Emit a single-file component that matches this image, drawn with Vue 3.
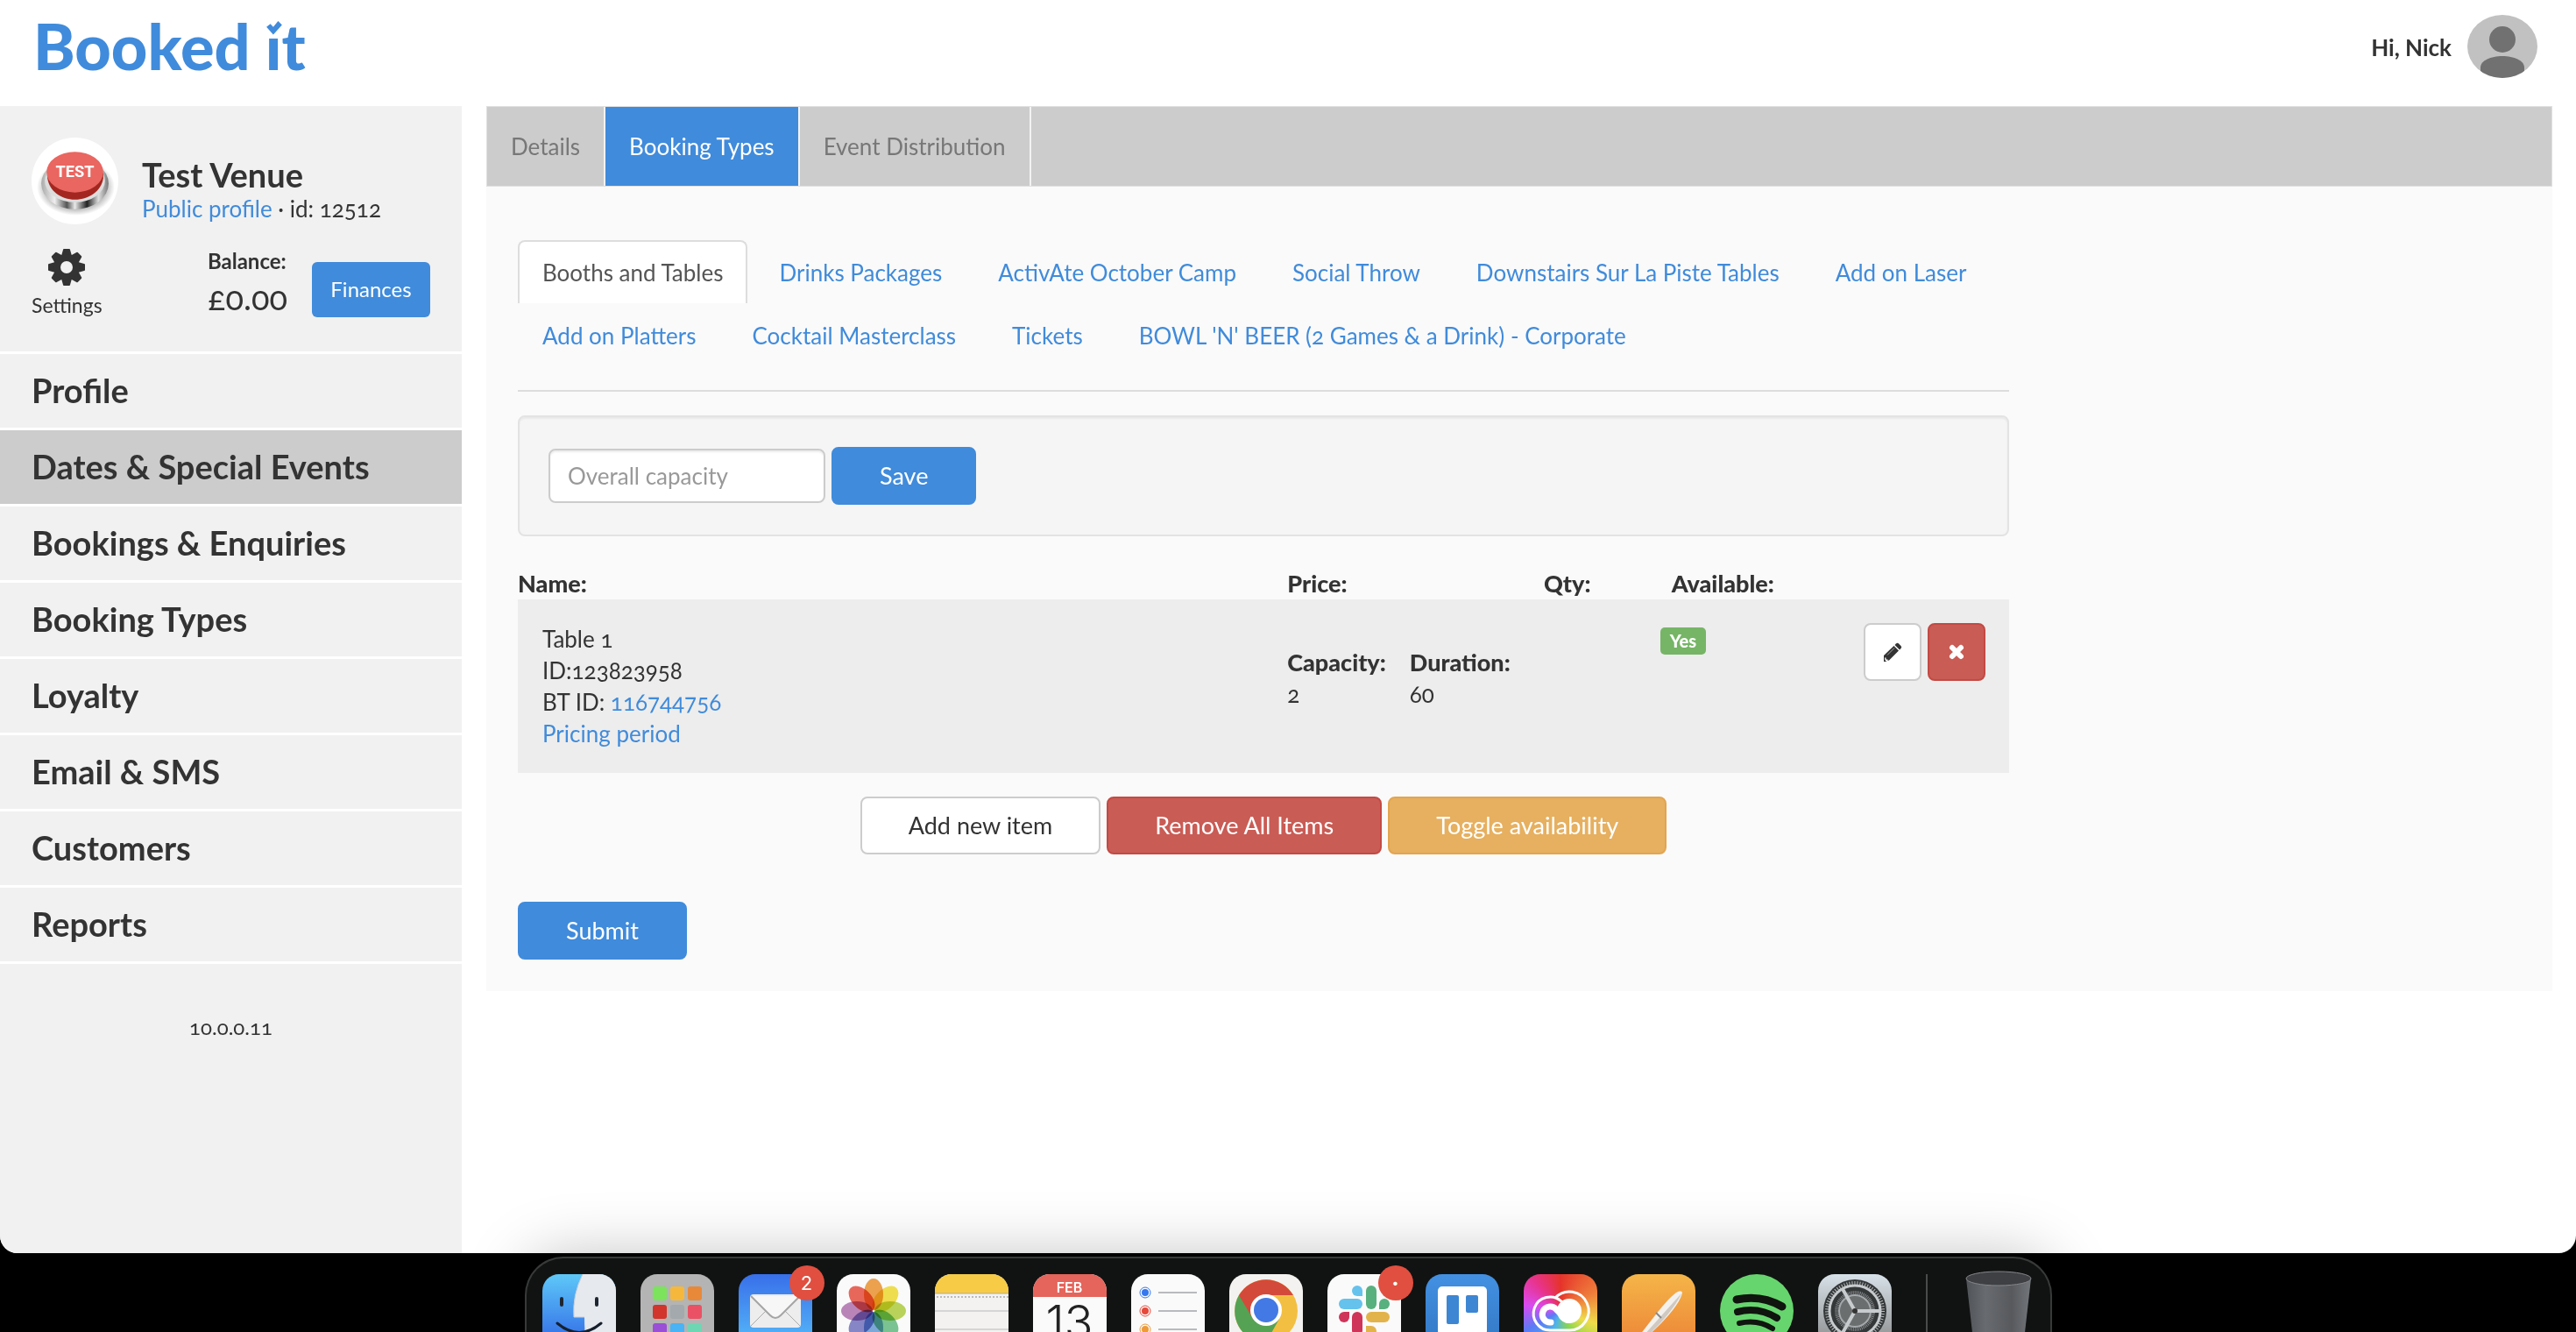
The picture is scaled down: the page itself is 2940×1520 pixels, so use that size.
<script setup>
import { ref } from 'vue'

const capacity = ref('')
const activeMenu = ref('Dates & Special Events')
const activeTab = ref('Booking Types')
const activeType = ref('Booths and Tables')

const menu = [
  'Profile',
  'Dates & Special Events',
  'Bookings & Enquiries',
  'Booking Types',
  'Loyalty',
  'Email & SMS',
  'Customers',
  'Reports',
]

const tabs = ['Details', 'Booking Types', 'Event Distribution']

const types = [
  'Booths and Tables',
  'Drinks Packages',
  'ActivAte October Camp',
  'Social Throw',
  'Downstairs Sur La Piste Tables',
  'Add on Laser',
  'Add on Platters',
  'Cocktail Masterclass',
  'Tickets',
  "BOWL 'N' BEER (2 Games & a Drink) - Corporate",
]

const items = ref([
  { name: 'Table 1', id: '123823958', btId: '116744756', capacity: 2, duration: 60, available: true },
])

function toggleAvailability() {
  items.value.forEach(item => {
    item.available = !item.available
  })
}

function remove(item) {
  items.value = items.value.filter(i => i !== item)
}

// dock artwork
const launchpad = ['#7be35c', '#f5b83d', '#e8893a', '#d1352b', '#a3a9ac', '#ea5164', '#9a4fd6', '#49b3f5', '#6fd6b4']
const petals = ['#ef9a3c', '#f2df3b', '#b5d34a', '#6fc08a', '#6fa3d8', '#7c7cc4', '#b67bb5', '#ea5a4b']
const reminders = ['#3577ee', '#e6493a', '#ee9a38']
</script>

<template>
  <div class="desktop">
    <div class="window">
      <header class="topbar">
        <a href="#" class="logo">Booked <span class="logo-i">i<svg viewBox="0 0 18 18" aria-hidden="true"><path d="M0 0h18v18H0z" fill="#fff" /><path d="M1 6l4-3 3 3 5-6 4 4-9 10z" fill="#408bdb" /></svg></span>t</a>
        <a href="#" class="user">
          <span>Hi, Nick</span>
          <svg class="user-pic" viewBox="0 0 81 73" aria-hidden="true">
            <clipPath id="user-clip"><ellipse cx="40" cy="36" rx="40" ry="36" /></clipPath>
            <g clip-path="url(#user-clip)">
              <rect width="81" height="73" fill="#c1c1c1" />
              <circle cx="40" cy="28" r="15" fill="#717171" />
              <path d="M15 73V60c0-8 12-13 25-13s25 5 25 13v13z" fill="#717171" />
            </g>
          </svg>
        </a>
      </header>

      <div class="body">
        <aside class="sidebar">
          <div class="venue">
            <div class="venue-head">
              <svg class="venue-pic" viewBox="0 0 98 98" aria-hidden="true">
                <defs>
                  <linearGradient id="chrome-ring" x1="0" x2="1">
                    <stop offset="0" stop-color="#aaa" />
                    <stop offset=".2" stop-color="#eee" />
                    <stop offset=".38" stop-color="#555" />
                    <stop offset=".5" stop-color="#e8e8e8" />
                    <stop offset=".68" stop-color="#222" />
                    <stop offset=".85" stop-color="#ddd" />
                    <stop offset="1" stop-color="#777" />
                  </linearGradient>
                  <radialGradient id="btn-shadow">
                    <stop offset=".6" stop-color="#000" stop-opacity=".45" />
                    <stop offset="1" stop-color="#000" stop-opacity="0" />
                  </radialGradient>
                </defs>
                <circle cx="49" cy="49" r="49" fill="#fff" />
                <ellipse cx="50" cy="56" rx="44" ry="32" fill="url(#btn-shadow)" />
                <ellipse cx="49" cy="52" rx="38" ry="29" fill="url(#chrome-ring)" />
                <ellipse cx="49" cy="49" rx="34" ry="24" fill="#ddd" />
                <path d="M18 40v6c2 14 15 24 31 24s30-10 32-24v-6z" fill="#a32620" />
                <ellipse cx="49" cy="39" rx="32" ry="23" fill="#ea6660" />
                <text x="49" y="45" text-anchor="middle">TEST</text>
              </svg>
              <div>
                <h1>Test Venue</h1>
                <p><a href="#">Public profile</a> · id: 12512</p>
              </div>
            </div>
            <div class="venue-foot">
              <a href="#" class="settings">
                <svg viewBox="-21 -21 42 42" aria-hidden="true">
                  <path v-for="n in 8" :key="n" d="M-6-13l2-7q0-1 1-1h6q1 0 1 1l2 7z" :transform="`rotate(${n * 45})`" />
                  <circle r="11" fill="none" stroke="#333" stroke-width="8" />
                </svg>
                Settings
              </a>
              <div class="balance">
                <strong>Balance:</strong>
                <span>£0.00</span>
              </div>
              <button type="button" class="finances">Finances</button>
            </div>
          </div>
          <nav class="menu">
            <a v-for="m in menu" :key="m" href="#" :class="{ active: m === activeMenu }" @click.prevent="activeMenu = m">{{ m }}</a>
          </nav>
          <p class="ip">10.0.0.11</p>
        </aside>

        <main class="content">
          <nav class="tabs">
            <a v-for="t in tabs" :key="t" href="#" :class="{ active: t === activeTab }" @click.prevent="activeTab = t">{{ t }}</a>
          </nav>

          <section class="panel">
            <nav class="types">
              <a v-for="t in types" :key="t" href="#" :class="{ active: t === activeType }" @click.prevent="activeType = t">{{ t }}</a>
            </nav>
            <hr>
            <form class="well" @submit.prevent>
              <input v-model="capacity" type="text" placeholder="Overall capacity" aria-label="Overall capacity">
              <button type="submit" class="btn btn-primary">Save</button>
            </form>

            <table class="items">
              <colgroup>
                <col class="col-name">
                <col class="col-price">
                <col class="col-qty">
                <col class="col-avail">
                <col>
              </colgroup>
              <thead>
                <tr>
                  <th>Name:</th>
                  <th>Price:</th>
                  <th>Qty:</th>
                  <th class="th-avail">Available:</th>
                  <th></th>
                </tr>
              </thead>
              <tbody>
                <tr v-for="item in items" :key="item.id">
                  <td class="td-name">
                    <div>{{ item.name }}</div>
                    <div>ID:{{ item.id }}</div>
                    <div>BT ID: <a href="#">{{ item.btId }}</a></div>
                    <div><a href="#">Pricing period</a></div>
                  </td>
                  <td colspan="2">
                    <dl class="specs">
                      <div><dt>Capacity:</dt><dd>{{ item.capacity }}</dd></div>
                      <div><dt>Duration:</dt><dd>{{ item.duration }}</dd></div>
                    </dl>
                  </td>
                  <td><span class="label">{{ item.available ? 'Yes' : 'No' }}</span></td>
                  <td>
                    <div class="row-actions">
                      <button type="button" class="btn btn-default btn-icon" aria-label="Edit">
                        <svg viewBox="0 0 22 22" aria-hidden="true">
                          <path d="M15 1.500q1.500-1.500 3 0l2.500 2.500q1.500 1.500 0 3L19 8.500 13.500 3z" />
                          <path d="M12.500 4L18 9.500 7 20.500 1 22l0-7z" />
                          <path d="M5 14.500l8-8" stroke="#aaa" stroke-width="1" fill="none" />
                          <path d="M2 17.500l1.500 0 0 2 2 0 0 1.500-3 .5z" fill="#fff" />
                          <path d="M1 19l3 3H1z" />
                        </svg>
                      </button>
                      <button type="button" class="btn btn-danger btn-icon" aria-label="Delete" @click="remove(item)">
                        <svg viewBox="0 0 22 22" aria-hidden="true">
                          <path d="M6 6l10 10M16 6L6 16" stroke="#fff" stroke-width="6" stroke-linecap="round" />
                        </svg>
                      </button>
                    </div>
                  </td>
                </tr>
              </tbody>
            </table>

            <div class="bulk">
              <button type="button" class="btn btn-default">Add new item</button>
              <button type="button" class="btn btn-danger" @click="items = []">Remove All Items</button>
              <button type="button" class="btn btn-warning" @click="toggleAvailability">Toggle availability</button>
            </div>
            <button type="button" class="btn btn-primary">Submit</button>
          </section>
        </main>
      </div>
    </div>

    <div class="dock">
      <button type="button" class="app finder" aria-label="Finder">
        <svg viewBox="0 0 84 84">
          <path d="M46 0H84V84H50Q48 66 48 49H36Q34 24 46 0z" fill="#e6e9ee" />
          <path d="M46 0Q34 24 36 49H48" fill="none" stroke="#c8d0da" />
          <path d="M22 28v7M62 28v7" stroke="#1d2630" stroke-width="4" stroke-linecap="round" />
          <path d="M17 56q25 21 50 0" fill="none" stroke="#16202c" stroke-width="3" stroke-linecap="round" />
        </svg>
      </button>
      <button type="button" class="app launchpad" aria-label="Launchpad">
        <svg viewBox="0 0 84 84">
          <rect v-for="(c, i) in launchpad" :key="c" :x="14 + (i % 3) * 20" :y="14 + Math.floor(i / 3) * 21" width="16" height="16" rx="3" :fill="c" />
        </svg>
      </button>
      <button type="button" class="app mail" aria-label="Mail">
        <svg viewBox="0 0 84 84">
          <rect x="13" y="23" width="58" height="38" rx="4" fill="#ededed" />
          <path d="M14 59l18-18M70 59L52 41" stroke="#aaa" stroke-width="1" />
          <path d="M14 25l22 22q6 6 12 0l22-22" fill="#f7f7f7" stroke="#a5a5a5" stroke-width="2" />
        </svg>
        <span class="badge">2</span>
      </button>
      <button type="button" class="app photos" aria-label="Photos">
        <svg viewBox="0 0 84 84">
          <ellipse v-for="(c, i) in petals" :key="c" cx="42" cy="23" rx="11" ry="18" :fill="c" :transform="`rotate(${i * 45} 42 42)`" />
        </svg>
      </button>
      <button type="button" class="app notes" aria-label="Notes">
        <svg viewBox="0 0 84 84">
          <path d="M0 0h84v22H0z" fill="#f7cb45" />
          <path d="M0 22h84" stroke="#aaa" />
          <path d="M2 26h82" stroke="#bbb" stroke-width="2" stroke-dasharray="2 2" />
          <path d="M0 42h84M0 63h84" stroke="#d5d5d5" stroke-width="2" />
        </svg>
      </button>
      <button type="button" class="app calendar" aria-label="Calendar">
        <span class="month">FEB</span>
        <span class="day">13</span>
      </button>
      <button type="button" class="app reminders" aria-label="Reminders">
        <svg viewBox="0 0 84 84">
          <g v-for="(c, i) in reminders" :key="c">
            <circle cx="16" :cy="21 + i * 21" r="6" fill="none" :stroke="c" stroke-width="1" />
            <circle cx="16" :cy="21 + i * 21" r="4" :fill="c" />
            <path :d="`M31 ${21 + i * 21}h44`" stroke="#b9babd" stroke-width="2" />
          </g>
        </svg>
      </button>
      <button type="button" class="app chrome" aria-label="Chrome">
        <svg viewBox="0 0 84 84">
          <circle cx="42" cy="42" r="36" fill="#f3bf42" />
          <path d="M42 42L11 24A36 36 0 0 0 42 78L57 51z" fill="#55a254" />
          <path d="M11 24A36 36 0 0 1 73 24H42L27 51z" fill="#d44a3a" />
          <circle cx="42" cy="41" r="18" fill="#fff" />
          <circle cx="42" cy="41" r="14" fill="#4379e4" />
        </svg>
      </button>
      <button type="button" class="app slack" aria-label="Slack">
        <svg viewBox="0 0 84 84">
          <g fill="#65c2ec"><path d="M40 25h-6a6 6 0 1 1 6-6z" /><rect x="13" y="28" width="27" height="12" rx="6" /></g>
          <g fill="#58b07f"><rect x="44" y="13" width="12" height="27" rx="6" /><path d="M59 40v-6a6 6 0 1 1 6 6z" /></g>
          <g fill="#cf3559"><path d="M25 43v6a6 6 0 1 1-6-6z" /><rect x="28" y="43" width="12" height="27" rx="6" /></g>
          <g fill="#e3b34b"><rect x="44" y="43" width="27" height="12" rx="6" /><path d="M44 59h6a6 6 0 1 1-6 6z" /></g>
        </svg>
        <span class="badge badge-dot">•</span>
      </button>
      <button type="button" class="app trello" aria-label="Trello">
        <svg viewBox="0 0 84 84">
          <rect x="14" y="14" width="56" height="56" rx="5" fill="#fff" />
          <rect x="24" y="24" width="14" height="33" rx="2" fill="#3d86d3" />
          <rect x="46" y="24" width="14" height="20" rx="2" fill="#3d86d3" />
        </svg>
      </button>
      <button type="button" class="app creative" aria-label="Creative Cloud">
        <svg viewBox="0 0 84 84" fill="none" stroke="#fff" stroke-linecap="round">
          <path d="M36 27A22 22 0 1 1 52 64H31A19 19 0 1 1 43 31L55 43" stroke-width="3" />
          <path d="M31 55a9 9 0 1 1 6-15l12 12" stroke-width="7" />
          <circle cx="52" cy="42" r="14" fill="#fff" stroke="none" />
        </svg>
      </button>
      <button type="button" class="app pages" aria-label="Pages">
        <svg viewBox="0 0 84 84">
          <path d="M64 20q4-2 5 1-2 12-25 36L18 82l-5-3 25-32Q56 24 64 20z" fill="#f4f1ed" />
          <path d="M68 22Q62 36 43 57L18 82l-3-1 26-29z" fill="#cfc9c2" />
          <path d="M39 44l6 6" stroke="#888" stroke-width="2" />
        </svg>
      </button>
      <button type="button" class="app spotify" aria-label="Spotify">
        <svg viewBox="0 0 84 84" fill="none" stroke="#10150f" stroke-linecap="round">
          <path d="M19 29q28-6 52 8" stroke-width="9" />
          <path d="M20 43q24-6 45 7" stroke-width="8" />
          <path d="M22 56q21-5 38 6" stroke-width="6" />
        </svg>
      </button>
      <button type="button" class="app prefs" aria-label="System Settings">
        <svg viewBox="0 0 84 84" fill="none">
          <circle cx="42" cy="42" r="36" fill="#353839" />
          <circle cx="42" cy="42" r="32" stroke="#b9bcbe" stroke-width="4" stroke-dasharray="1 2" />
          <circle cx="42" cy="42" r="29" stroke="#c8cbcd" stroke-width="3" />
          <circle cx="42" cy="42" r="21" stroke="#85888a" stroke-width="4" stroke-dasharray="1 1" />
          <circle cx="42" cy="42" r="18" fill="#6b6e6f" stroke="#a5a8aa" stroke-width="2" />
          <path d="M42 42h28M42 42L28 17M42 42L28 67" stroke="#c8cbcd" stroke-width="4" />
          <circle cx="42" cy="42" r="3" fill="#333" />
        </svg>
      </button>
      <span class="dock-line"></span>
      <button type="button" class="app trash" aria-label="Trash">
        <svg viewBox="0 0 84 88">
          <defs>
            <linearGradient id="bin" x1="0" x2="1">
              <stop offset="0" stop-color="#505357" />
              <stop offset=".3" stop-color="#686b6f" />
              <stop offset=".7" stop-color="#57595d" />
              <stop offset="1" stop-color="#73767a" />
            </linearGradient>
          </defs>
          <path d="M5 9l9 79h56l9-79z" fill="url(#bin)" />
          <ellipse cx="42" cy="9" rx="37" ry="8" fill="#3e4044" stroke="#85888b" stroke-width="1" />
        </svg>
      </button>
    </div>
  </div>
</template>

<style>
body {
  margin: 0;
  background: #000;
}
</style>

<style scoped>
.desktop {
  height: 100vh;
  display: flex;
  flex-direction: column;
  overflow: hidden;
  background: #000;
  color: #333;
  font-family: Lato, "Open Sans", sans-serif;
  font-size: 26px;
  line-height: 36px;
  font-variant-numeric: oldstyle-nums;
}

.desktop * {
  box-sizing: border-box;
}

a {
  color: #408bdb;
  text-decoration: none;
}

p,
h1 {
  margin: 0;
}

button,
input {
  font: inherit;
}

button {
  cursor: pointer;
}

.window {
  flex: 1;
  min-height: 0;
  display: flex;
  flex-direction: column;
  background: #fff;
  border-radius: 0 0 20px 20px;
  overflow: hidden;
}

.topbar {
  display: flex;
  justify-content: space-between;
  align-items: center;
  height: 121px;
  padding: 0 43px 14px 38px;
  flex-shrink: 0;
}

.logo {
  padding-bottom: 4px;
  font-size: 72px;
  line-height: 80px;
  font-weight: 900;
}

.logo-i {
  position: relative;
}

.logo-i svg {
  position: absolute;
  left: 0;
  top: 15px;
  width: 20px;
  height: 20px;
}

.user {
  display: flex;
  align-items: center;
  gap: 18px;
  color: #333;
  font-weight: 700;
}

.user-pic {
  width: 81px;
  height: 73px;
}

.body {
  flex: 1;
  display: flex;
  gap: 28px;
  padding-right: 27px;
}

.sidebar {
  width: 527px;
  flex-shrink: 0;
  background: #f1f1f1;
}

.venue {
  height: 280px;
  padding: 36px;
}

.venue-head {
  display: flex;
  align-items: center;
  gap: 27px;
}

.venue-pic {
  width: 99px;
  height: 99px;
}

.venue-pic text {
  font: 700 18px Roboto, sans-serif;
  fill: #fff;
}

.venue h1 {
  margin-top: 20px;
  font-size: 38px;
  line-height: 42px;
  font-weight: 700;
}

.venue-foot {
  display: flex;
  align-items: center;
  margin-top: 24px;
}

.settings {
  display: flex;
  flex-direction: column;
  align-items: center;
  gap: 4px;
  color: #333;
  font-size: 23px;
}

.settings svg {
  width: 42px;
  height: 42px;
  fill: #333;
}

.balance {
  display: flex;
  flex-direction: column;
  margin-left: auto;
  padding-bottom: 8px;
  font-size: 24px;
}

.balance span {
  font-size: 38px;
  line-height: 46px;
}

.finances {
  width: 135px;
  height: 63px;
  margin-left: 28px;
  margin-top: 10px;
  padding: 0;
  border: 0;
  border-radius: 6px;
  background: #408bdb;
  color: #fff;
  font-size: 24px;
}

.menu {
  border-top: 3px solid #fff;
}

.menu a {
  display: block;
  padding: 20px 36px 22px;
  border-bottom: 3px solid #fff;
  color: #333;
  font-size: 38px;
  line-height: 42px;
  font-weight: 700;
}

.menu a.active {
  background: #ccc;
}

.ip {
  margin-top: 54px;
  text-align: center;
  font-size: 24px;
}

.content {
  flex: 1;
}

.tabs {
  display: flex;
  height: 92px;
  border: 1px solid #e0e0e0;
  background: #ccc;
}

.tabs a {
  padding: 27px;
  border-right: 2px solid #f2f2f2;
  color: #777;
}

.tabs a.active {
  background: #408bdb;
  color: #fff;
}

.panel {
  padding: 61px 620px 36px 36px;
  background: #fafafa;
}

.types {
  display: flex;
  flex-wrap: wrap;
  column-gap: 8px;
}

.types a {
  height: 72px;
  padding: 17px 26px;
  border: 2px solid transparent;
}

.types a.active {
  border-color: #ddd;
  border-bottom: 0;
  border-radius: 8px 8px 0 0;
  background: #fff;
  color: #555;
}

.panel hr {
  margin: 27px 0;
  border: 0;
  border-top: 2px solid #ddd;
}

.well {
  display: flex;
  align-items: center;
  gap: 7px;
  height: 138px;
  padding: 0 33px;
  border: 2px solid #e3e3e3;
  border-radius: 8px;
  background: #f5f5f5;
  box-shadow: inset 0 2px 2px rgba(0, 0, 0, 0.05);
}

.well input {
  width: 316px;
  height: 62px;
  padding: 0 20px;
  border: 2px solid #ccc;
  border-radius: 8px;
  background: #fff;
  color: #555;
  box-shadow: inset 0 2px 2px rgba(0, 0, 0, 0.075);
}

.well input::placeholder {
  color: #999;
}

.btn {
  height: 66px;
  padding: 0 53px;
  border: 2px solid transparent;
  border-radius: 8px;
  color: #fff;
  font-size: 27px;
}

.btn-primary {
  border-color: #408bdb;
  background: #408bdb;
}

.btn-default {
  border-color: #ccc;
  background: #fff;
  color: #333;
}

.btn-danger {
  border-color: #c34a44;
  background: #c95c55;
}

.btn-warning {
  border-color: #e3a550;
  background: #e6b060;
}

.btn-icon {
  display: flex;
  align-items: center;
  justify-content: center;
  width: 66px;
  padding: 0;
}

.btn-icon svg {
  width: 22px;
  height: 22px;
  fill: #333;
}

.items {
  width: 100%;
  margin-top: 36px;
  table-layout: fixed;
  border-collapse: collapse;
}

.col-name {
  width: 51.6%;
}

.col-price {
  width: 17.2%;
}

.col-qty {
  width: 7.8%;
}

.col-avail {
  width: 11.7%;
}

.items th {
  padding: 0;
  text-align: left;
  font-size: 27px;
  font-weight: 900;
}

.items .th-avail {
  padding-left: 13px;
}

.items tbody {
  background: #ededed;
}

.items td {
  padding: 27px 0;
  vertical-align: top;
}

.items .td-name {
  padding-left: 28px;
}

.specs {
  display: flex;
  gap: 27px;
  margin: 27px 0 0;
}

.specs dt {
  font-size: 27px;
  font-weight: 900;
}

.specs dd {
  margin: 0;
}

.label {
  display: inline-block;
  margin-top: 5px;
  padding: 0 11px;
  border-radius: 5px;
  background: #76b566;
  color: #fff;
  font-size: 20px;
  line-height: 31px;
  font-weight: 900;
}

.row-actions {
  display: flex;
  justify-content: flex-end;
  gap: 7px;
  padding-right: 27px;
}

.bulk {
  display: flex;
  justify-content: center;
  gap: 7px;
  margin: 27px 0 54px;
}

/* dock */
.dock {
  position: relative;
  display: flex;
  align-self: center;
  gap: 28px;
  height: 86px;
  margin-top: 4px;
  padding: 18px 17px 0 18px;
  border: 2px solid #383a3a;
  border-bottom: 0;
  border-radius: 44px 44px 0 0;
  background: #111312;
  box-shadow: 0 0 70px rgba(0, 0, 0, 0.25);
}

.app {
  position: relative;
  width: 84px;
  height: 84px;
  padding: 0;
  border: 0;
  border-radius: 19px;
  background: #fafafa;
  flex-shrink: 0;
}

.app svg {
  display: block;
  width: 84px;
  height: 84px;
  border-radius: 19px;
}

.finder {
  background: linear-gradient(#5ec8f8, #2f65e6);
}

.launchpad {
  background: #b3b4b3;
}

.mail {
  background: linear-gradient(#386fea, #57bdf9);
}

.photos ellipse {
  mix-blend-mode: multiply;
  opacity: 0.9;
}

.chrome,
.notes {
  background: #f3f2f0;
}

.calendar {
  overflow: hidden;
}

.month,
.day {
  display: block;
  font-family: Inter, sans-serif;
  font-variant-numeric: normal;
}

.month {
  height: 26px;
  background: #e5645b;
  color: #fff;
  font-size: 16px;
  line-height: 30px;
  font-weight: 600;
}

.day {
  font-size: 54px;
  line-height: 58px;
  font-weight: 300;
  color: #222;
}

.trello {
  background: linear-gradient(#4390e2, #3378c4);
}

.creative {
  background: conic-gradient(from 0deg at 50% 50%, #e5332b, #ee7b3a 60deg, #efdc4a 110deg, #8cd64f 150deg, #4fb4e8 200deg, #5a7cf5 240deg, #d94bf0 280deg, #e8338a 320deg, #e5332b);
}

.pages {
  background: linear-gradient(#f5b548, #ec8337);
}

.spotify {
  border-radius: 50%;
  background: #67d56e;
}

.prefs {
  background: linear-gradient(#d7e1e8, #8a8a8a);
}

.badge {
  position: absolute;
  top: -10px;
  right: -14px;
  width: 40px;
  height: 40px;
  border-radius: 50%;
  background: #e04f40;
  color: #fff;
  font: 22px/40px Inter, sans-serif;
}

.badge-dot {
  font-size: 14px;
}

.dock-line {
  width: 2px;
  margin: 0 11px;
  background: #4a4c4c;
}

.trash {
  margin-top: -4px;
  background: none;
}

.trash svg {
  height: 88px;
  border-radius: 0;
}
</style>
